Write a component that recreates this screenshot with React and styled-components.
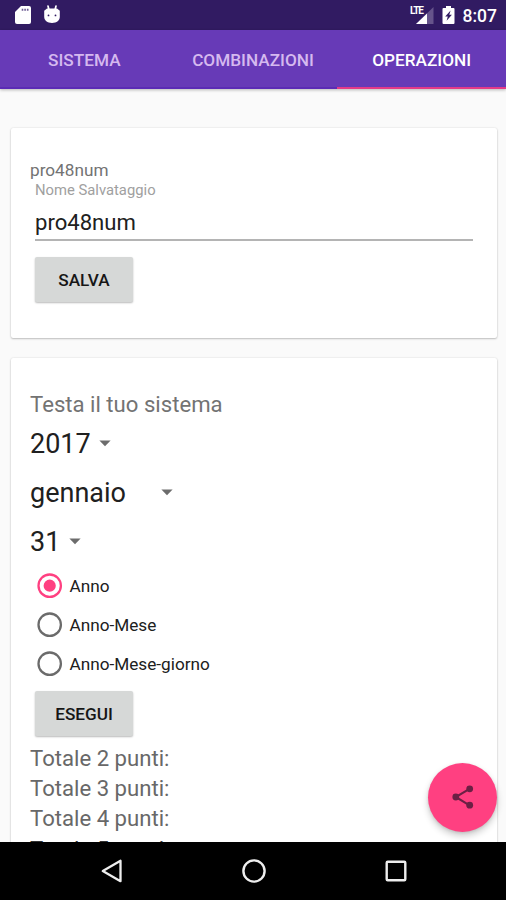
import React from "react";
import styled, { createGlobalStyle } from "styled-components";

const GlobalStyle = createGlobalStyle`
  * { box-sizing: border-box; }
  body { margin: 0; background: #fafafa; }
`;

const Screen = styled.div`
  position: relative;
  width: 506px;
  height: 900px;
  display: flex;
  flex-direction: column;
  overflow: hidden;
  background: #fafafa;
  font-family: Roboto, "Liberation Sans", sans-serif;
`;

const StatusBar = styled.header`
  flex: none;
  height: 30px;
  display: flex;
  align-items: center;
  padding: 0 9px 0 13px;
  background: #311b62;
  color: #fff;
`;

const StatusGroup = styled.div`
  display: flex;
  align-items: center;
  height: 30px;
  gap: ${(p) => p.$gap}px;
  margin-left: ${(p) => (p.$end ? "auto" : 0)};
`;

const Clock = styled.span`
  font-size: 17.5px;
  font-weight: 500;
  line-height: 30px;
  padding-top: 2px;
`;

const TabBar = styled.nav`
  flex: none;
  z-index: 1;
  height: 59px;
  display: grid;
  grid-template-columns: repeat(3, 1fr);
  background: #673ab7;
  box-shadow: 0 1px 3px rgba(0, 0, 0, 0.28);
`;

const Tab = styled.div`
  display: flex;
  align-items: center;
  justify-content: center;
  padding-top: 3px;
  border-bottom: 2px solid ${(p) => (p.$active ? "#e53a88" : "#5b2bb5")};
  color: ${(p) => (p.$active ? "#fff" : "#d5b9ef")};
  font-size: 17.2px;
  font-weight: 500;
`;

const Content = styled.main`
  flex: 1;
  min-height: 0;
  overflow: hidden;
  display: flex;
  flex-direction: column;
  gap: 20px;
  padding: 39px 9px 0 11px;
`;

const Card = styled.section`
  flex: none;
  height: ${(p) => p.$height}px;
  padding: ${(p) => p.$top}px 24px 0 19px;
  background: #fff;
  border-radius: 2px;
  box-shadow: 0 1px 2px rgba(0, 0, 0, 0.22), 0 0 2px rgba(0, 0, 0, 0.12);
`;

const Text = styled.div`
  height: ${(p) => p.$line}px;
  line-height: ${(p) => p.$line}px;
  font-size: ${(p) => p.$size}px;
  color: ${(p) => p.$color || "#737373"};
  white-space: nowrap;
`;

const Field = styled.div`
  margin-left: 5px;
`;

const FieldValue = styled(Text)`
  padding-top: 2px;
  border-bottom: 2px solid #b4b4b4;
`;

const Button = styled.button`
  display: block;
  width: 98px;
  height: 45px;
  margin: ${(p) => p.$top}px 0 0 5px;
  padding: 1px 0 0;
  border: 0;
  border-radius: 2px;
  background: #d6d8d7;
  box-shadow: 0 1px 2px rgba(0, 0, 0, 0.28);
  color: #161616;
  font: 500 17.2px Roboto, "Liberation Sans", sans-serif;
`;

const SpinnerList = styled.div`
  padding-top: 1px;
`;

const Spinner = styled.div`
  width: ${(p) => p.$width}px;
  height: 49px;
  display: flex;
  align-items: center;
  justify-content: space-between;

  & > svg { margin-bottom: 2px; }
`;

const RadioList = styled.div`
  margin-top: -1px;
`;

const RadioRow = styled.div`
  height: 39.3px;
  display: flex;
  align-items: center;
  gap: 6.5px;
  padding-left: 7px;
`;

const RadioLabel = styled(Text)`
  padding-top: 0.4px;
`;

const Results = styled.div`
  padding-top: 7px;
`;

const Result = styled(Text)`
  color: #686868;

  &:last-child {
    padding-top: 1px;
    color: #333;
  }
`;

const Fab = styled.button`
  position: absolute;
  left: 428px;
  top: 763px;
  width: 69px;
  height: 69px;
  display: grid;
  place-items: center;
  padding: 0 0 1px;
  border: 0;
  border-radius: 50%;
  background: #ff4081;
  box-shadow: 0 4px 7px rgba(0, 0, 0, 0.2), 0 1px 3px rgba(0, 0, 0, 0.1);
`;

const NavBar = styled.footer`
  flex: none;
  height: 58px;
  display: flex;
  align-items: center;
  justify-content: space-between;
  padding: 0 98px 0 100px;
  background: #000;
`;

const SdCard = () => (
  <svg width="19" height="20" viewBox="0 0 19 20">
    <path d="M8 1h8a2 2 0 0 1 2 2v14a2 2 0 0 1-2 2H4a2 2 0 0 1-2-2V7z" fill="#fff" />
    <path d="M8.7 4.8h6.8" stroke="#6d5c93" strokeWidth="2" strokeDasharray="1.6 1" />
  </svg>
);

const AndroidHead = () => (
  <svg width="18" height="20" viewBox="0 0 18 20">
    <path d="M5 1l1 4M13 1l-1 4" stroke="#fff" strokeWidth="1.7" strokeLinecap="round" />
    <path d="M4 3.6h10l2.8 2.2v5.9c0 3.7-3 6.2-7.8 6.2s-7.8-2.5-7.8-6.2V5.8z" fill="#fff" />
    <circle cx="5.5" cy="10.4" r="0.9" fill="#311b62" />
    <circle cx="12.5" cy="10.4" r="0.9" fill="#311b62" />
  </svg>
);

const LteBox = styled.div`
  display: grid;
  width: 24px;
  height: 20px;
  & > * { grid-area: 1 / 1; }
`;

const LteLabel = styled.span`
  padding: 0.5px 0 0 0.5px;
  font-size: 10px;
  font-weight: 700;
  line-height: 9px;
  letter-spacing: -1.2px;
`;

const Signal = () => (
  <LteBox>
    <svg width="24" height="20" viewBox="0 0 24 20">
      <path d="M23.5 2v17H6z" fill="#66548b" />
      <path d="M17 8.5V19H6z" fill="#fff" />
    </svg>
    <LteLabel>LTE</LteLabel>
  </LteBox>
);

const Battery = () => (
  <svg width="13" height="20" viewBox="0 0 13 20">
    <path d="M4 1h5v2h2.5a1 1 0 0 1 1 1v14a1 1 0 0 1-1 1h-10a1 1 0 0 1-1-1V4a1 1 0 0 1 1-1H4z" fill="#fff" />
    <path d="M8.6 5.5L3.2 11.6h2.6l-1.2 4.2 5.3-6H7.3z" fill="#311b62" />
  </svg>
);

const Caret = () => (
  <svg width="12" height="7" viewBox="0 0 12 7">
    <path d="M0.4 0.5h11.2L6 6.3z" fill="#6c6c6c" />
  </svg>
);

const RadioIcon = ({ checked }) => (
  <svg width="26" height="26" viewBox="0 0 26 26" fill="none">
    <circle cx="12.7" cy="12.7" r="11.2" stroke={checked ? "#ff4081" : "#6b6b6b"} strokeWidth="2.3" />
    {checked && <circle cx="12.7" cy="12.7" r="6.1" fill="#ff4081" />}
  </svg>
);

const ShareIcon = () => (
  <svg width="24" height="26" viewBox="0 0 24 26">
    <path d="M18.5 4.8L4.8 13l13.7 8.3" fill="none" stroke="#6b2044" strokeWidth="2.1" />
    <circle cx="18.7" cy="4.8" r="3.4" fill="#6b2044" />
    <circle cx="4.8" cy="13" r="3.4" fill="#6b2044" />
    <circle cx="18.7" cy="21.2" r="3.4" fill="#6b2044" />
  </svg>
);

const SPINNERS = [
  { label: "2017", width: 81 },
  { label: "gennaio", width: 143 },
  { label: "31", width: 51 },
];
const RADIOS = ["Anno", "Anno-Mese", "Anno-Mese-giorno"];

export default function App() {
  return (
    <Screen>
      <GlobalStyle />
      <StatusBar>
        <StatusGroup $gap={11}>
          <SdCard />
          <AndroidHead />
        </StatusGroup>
        <StatusGroup $gap={8} $end>
          <Signal />
          <Battery />
          <Clock>8:07</Clock>
        </StatusGroup>
      </StatusBar>
      <TabBar>
        <Tab>SISTEMA</Tab>
        <Tab>COMBINAZIONI</Tab>
        <Tab $active>OPERAZIONI</Tab>
      </TabBar>
      <Content>
        <Card $height={210} $top={32}>
          <Text $size={17.2} $line={21}>pro48num</Text>
          <Field>
            <Text $size={14.8} $line={18} $color="#a0a0a0">Nome Salvataggio</Text>
            <FieldValue $size={22.1} $line={42} $color="#202020">pro48num</FieldValue>
          </Field>
          <Button $top={16}>SALVA</Button>
        </Card>
        <Card $height={600} $top={31}>
          <Text $size={22.15} $line={30}>Testa il tuo sistema</Text>
          <SpinnerList>
            {SPINNERS.map((s) => (
              <Spinner key={s.label} $width={s.width}>
                <Text as="span" $size={27} $line={49} $color="#202020">{s.label}</Text>
                <Caret />
              </Spinner>
            ))}
          </SpinnerList>
          <RadioList>
            {RADIOS.map((label, i) => (
              <RadioRow key={label}>
                <RadioIcon checked={i === 0} />
                <RadioLabel as="span" $size={17.2} $line={39} $color="#202020">{label}</RadioLabel>
              </RadioRow>
            ))}
          </RadioList>
          <Button $top={7}>ESEGUI</Button>
          <Results>
            {[2, 3, 4, 5].map((n) => (
              <Result key={n} $size={22.15} $line={30}>{`Totale ${n} punti:`}</Result>
            ))}
          </Results>
        </Card>
      </Content>
      <NavBar>
        <svg width="24" height="26" viewBox="0 0 24 26">
          <path d="M20.5 2.8v20.4L2.8 13z" fill="none" stroke="#eee" strokeWidth="2.3" strokeLinejoin="round" />
        </svg>
        <svg width="26" height="26" viewBox="0 0 26 26">
          <circle cx="13" cy="13" r="10.6" fill="none" stroke="#eee" strokeWidth="2.4" />
        </svg>
        <svg width="24" height="24" viewBox="0 0 24 24">
          <rect x="2.7" y="2.7" width="18.6" height="18.6" rx="1" fill="none" stroke="#eee" strokeWidth="2.4" />
        </svg>
      </NavBar>
      <Fab aria-label="Condividi">
        <ShareIcon />
      </Fab>
    </Screen>
  );
}
